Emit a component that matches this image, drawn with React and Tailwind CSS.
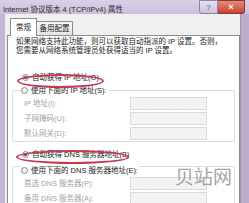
import React from "react";

const font = { fontFamily: '"Liberation Sans", "Noto Sans CJK SC", sans-serif' };

const Radio = ({ checked, label, muted }) => (
  <div className="flex items-center h-[10px] gap-[3px]">
    <span className="w-[7px] h-[7px] rounded-full border border-[#8a8a8a] bg-gradient-to-br from-[#e6e6e6] to-[#ffffff] flex items-center justify-center">
      {checked && <span className="w-[3px] h-[3px] rounded-full bg-[#1f3f73]" />}
    </span>
    <span className={muted ? "text-[#9c9c9c]" : "text-[#1a1a1a]"}>{label}</span>
  </div>
);

const IpBox = () => (
  <div className="w-[77px] h-[13px] border border-[#dadada] bg-[#f3f3f3] flex items-center text-[#b4b4b4] text-[6px]">
    <span className="flex-1" />
    <span>.</span>
    <span className="flex-1" />
    <span>.</span>
    <span className="flex-1" />
    <span>.</span>
    <span className="flex-1" />
  </div>
);

const FieldRow = ({ label }) => (
  <div className="flex items-center h-[15px]">
    <span className="w-[117px] pl-[11px] text-[#a2a2a2]">{label}</span>
    <IpBox />
  </div>
);

const Group = ({ legend, rows, extraTop }) => (
  <div className={`border border-[#d8dde3] rounded-[2px] ${extraTop}`}>
    <div className="-mt-[6px] pl-[8px]">
      <div className="inline-flex bg-white pr-[1px]">
        <Radio label={legend} />
      </div>
    </div>
    {rows.map((r) => (
      <FieldRow key={r} label={r} />
    ))}
  </div>
);

export default function App() {
  return (
    <div
      className="relative w-[249px] h-[203px] overflow-hidden bg-[#c6b9da] flex flex-col text-[7.5px] leading-[9px]"
      style={font}
    >
      {/* title bar */}
      <div className="h-[18px] flex items-start justify-between bg-gradient-to-b from-[#d9d1e6] to-[#cbc0dc] pl-[3px] pr-[4px]">
        <span className="mt-[5px] text-[#2c2c2c]">Internet 协议版本 4 (TCP/IPv4) 属性</span>
        <div className="flex">
          <div className="w-[19px] h-[14px] border border-[#8f82a6] rounded-bl-[3px] bg-gradient-to-b from-[#e6e0ee] to-[#cdc2dd] flex items-center justify-center text-[#5a5070] text-[8px]">
            ?
          </div>
          <div className="w-[27px] h-[14px] border border-l-0 border-[#8a3a35] rounded-br-[3px] bg-gradient-to-b from-[#e48a7c] to-[#c9402f] flex items-center justify-center text-white text-[9px] font-bold">
            ×
          </div>
        </div>
      </div>

      {/* body */}
      <div className="flex-1 flex">
        <div className="w-[5px] bg-[#c3b6d8]" />
        <div className="flex-1 bg-[#f0f0f0] pt-[4px] pl-[2px] border-r border-[#9a9a9a]">
          {/* tabs */}
          <div className="flex items-end h-[18px] pl-[3px] -mb-[1px] relative">
            <div className="h-[18px] w-[27px] bg-white border border-b-0 border-[#898c95] flex items-center justify-center text-[#1a1a1a] z-10">
              常规
            </div>
            <div className="h-[15px] w-[36px] bg-gradient-to-b from-[#f4f4f4] to-[#e4e4e4] border border-l-0 border-[#898c95] flex items-center justify-center text-[#1a1a1a]">
              备用配置
            </div>
          </div>

          {/* panel */}
          <div className="bg-white border border-[#898c95] h-[170px] pl-[4px] pr-[4px] pt-[1px]">
            <div className="pl-[4px] text-[#1a1a1a] whitespace-nowrap">
              <div>如果网络支持此功能，则可以获取自动指派的 IP 设置。否则，</div>
              <div>您需要从网络系统管理员处获得适当的 IP 设置。</div>
            </div>

            <div className="mt-[17px] pl-[10px]">
              <Radio checked label="自动获得 IP 地址(O)" />
            </div>

            <Group
              extraTop="mt-[8px]"
              legend="使用下面的 IP 地址(S):"
              rows={["IP 地址(I):", "子网掩码(U):", "默认网关(D):"]}
            />

            <div className="mt-[8px] pl-[10px]">
              <Radio checked label="自动获得 DNS 服务器地址(B)" />
            </div>

            <Group
              extraTop="mt-[6px] pt-[5px]"
              legend="使用下面的 DNS 服务器地址(E):"
              rows={["首选 DNS 服务器(P):", "备用 DNS 服务器(A):"]}
            />
          </div>
        </div>
        <div className="w-[8px] bg-[#bcaed3]" />
      </div>

      {/* red highlight marks */}
      <div className="absolute left-[17px] top-[74px] w-[87px] h-[14px] rounded-[50%] border-2 border-[#c23a52]" />
      <div className="absolute left-[16px] top-[150px] w-[113px] h-[14px] rounded-[50%] border-2 border-[#c23a52]" />

      {/* watermark */}
      <div className="absolute left-[175px] top-[166px] text-[19px] leading-[24px] text-[#8f8f8f] opacity-80">
        贝站网
      </div>
    </div>
  );
}
